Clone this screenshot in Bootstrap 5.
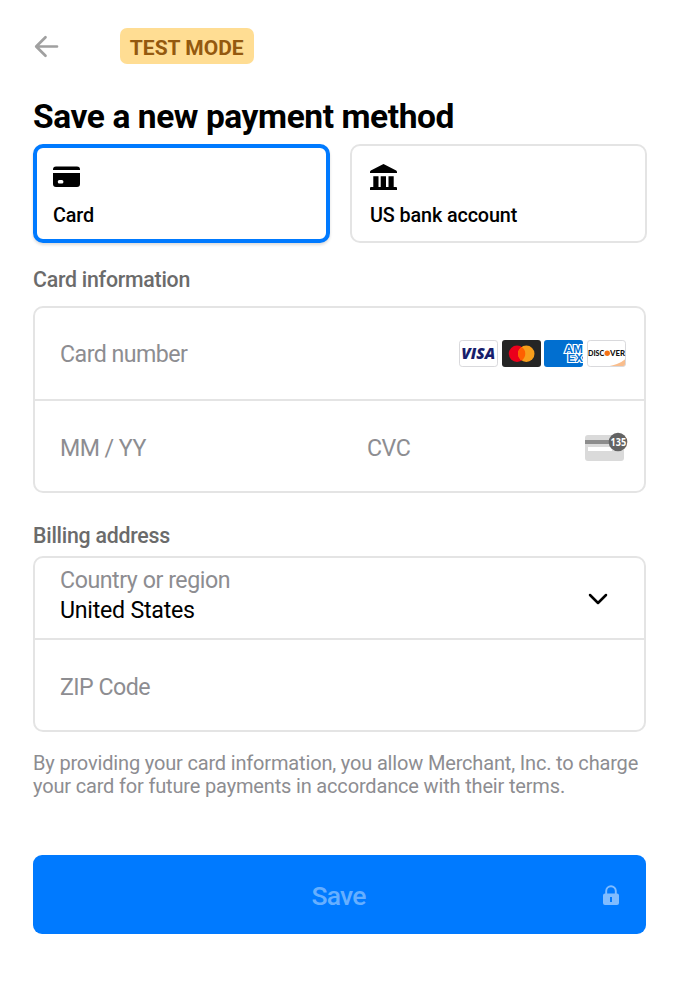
<!DOCTYPE html>
<html lang="en">
<head>
<meta charset="utf-8">
<meta name="viewport" content="width=device-width, initial-scale=1">
<title>Save a new payment method</title>
<link rel="stylesheet" href="https://cdn.jsdelivr.net/npm/bootstrap@5.3.0/dist/css/bootstrap.min.css">
<style>
body{font-family:Roboto,"Liberation Sans",sans-serif;color:#000;background:#fff}
.sheet{width:679px;height:1000px;padding:28px 32px 0 33px}
.topbar{height:36px}
.test-pill{margin-left:60.500px;width:134.500px;height:36px;border-radius:7px;background:#ffdd93;color:#94590f;font-weight:700;font-size:21px;letter-spacing:0;padding-top:5px}
.title{font-size:33.5px;line-height:40px;font-weight:700;margin:33px 0 7px;letter-spacing:-.42px}
.tabs{display:grid;grid-template-columns:297px 297px;column-gap:20px;width:614px}
.method{height:99px;border:2px solid #e4e4e4;border-radius:10px;background:#fff;padding:17px 18px 0;text-align:left;font-size:19.8px;line-height:24px;letter-spacing:-.12px;font-weight:500;color:#000}
.method svg{margin-bottom:13px}
.method.selected{border:4px solid #007aff;padding:15px 16px 0;box-shadow:0 2px 3px rgba(0,0,0,.14)}
.section-label{font-size:21.3px;line-height:26px;font-weight:500;letter-spacing:-.24px;color:#6b6b6b;margin:0}
.fieldset-box{border:2px solid #e4e4e4;border-radius:10px;width:613px;font-size:23.2px;letter-spacing:-.54px;color:#8d8d91}
.fieldset-box .line{padding:0 18px 0 25px}
.fieldset-box svg{letter-spacing:0}
.region-label{letter-spacing:-.45px}
.chosen{letter-spacing:-.25px}
.rule{border-bottom:2px solid #e4e4e4}
.terms{font-size:20px;line-height:23px;letter-spacing:-.165px;color:#8d8d91;margin:20px 0 0}
.save{width:613px;height:79px;border:0;border-radius:9px;background:#007aff;color:#66afff;font-size:26.5px;letter-spacing:-.8px;font-weight:500;margin-top:57px;padding:2px 2px 0 0}
.save svg{right:27px;top:29.500px}
</style>
</head>
<body>
<main class="sheet">
  <header class="topbar d-flex align-items-center">
    <svg width="26" height="24" viewBox="0 0 26 24" fill="none" stroke="#a0a0a0" stroke-width="2.700" stroke-linecap="round" stroke-linejoin="round"><path d="M24 12.500H4M12.500 3.200 3.200 12.500l9.300 9.300"/></svg>
    <span class="test-pill d-flex align-items-center justify-content-center">TEST MODE</span>
  </header>
  <h1 class="title text-nowrap">Save a new payment method</h1>
  <div class="tabs">
    <button type="button" class="method selected d-flex flex-column align-items-start">
      <svg width="27" height="28" viewBox="0 0 27 28"><path d="M0 7V6.500A3 3 0 0 1 3 3.500h21a3 3 0 0 1 3 3V7z"/><path fill-rule="evenodd" d="M0 10h27v11a3 3 0 0 1-3 3H3a3 3 0 0 1-3-3zM6.300 17a1.500 1.500 0 0 0-1.500 1.500v.5a1.500 1.500 0 0 0 1.500 1.500h2.600a1.500 1.500 0 0 0 1.500-1.500v-.5A1.500 1.500 0 0 0 8.900 17z"/></svg>
      Card
    </button>
    <button type="button" class="method d-flex flex-column align-items-start">
      <svg width="27" height="28" viewBox="0 0 27 28"><path d="M13.500 1 26.200 7.500Q27 8 27 9v1H0V9q0-1 .8-1.500zM3.300 13.300h5.200v10.700h2.200V13.300H16v10.700h2.500V13.300h5.200v10.700H26q1 0 1 1v2H0v-2Q0 24 1 24h2.300z"/></svg>
      US bank account
    </button>
  </div>
  <h2 class="section-label" style="margin:24px 0 13px">Card information</h2>
  <section class="fieldset-box">
    <div class="line rule d-flex align-items-center justify-content-between" style="height:93px">
      <span style="padding-top:2px">Card number</span>
      <div class="d-flex" style="gap:3.600px;margin-right:.2px">
        <svg width="39" height="27" viewBox="0 0 39 27"><rect x=".5" y=".5" width="38" height="26" rx="2.700" fill="#fff" stroke="#d9d9dc"/><text x="2.300" y="19.200" font-family="Open Sans" font-weight="800" font-style="italic" font-size="15" textLength="34" lengthAdjust="spacingAndGlyphs" fill="#171e6c">VISA</text></svg>
        <svg width="39" height="27" viewBox="0 0 39 27"><rect width="39" height="27" rx="3" fill="#252525"/><circle cx="15" cy="13.700" r="8.200" fill="#eb001b"/><circle cx="24.300" cy="13.700" r="8.200" fill="#f79e1b"/><path d="M19.650 6.900a8.200 8.200 0 0 1 0 13.600 8.200 8.200 0 0 1 0-13.600" fill="#ff5f00"/></svg>
        <svg width="39" height="27" viewBox="0 0 39 27"><defs><clipPath id="amex"><rect width="39" height="27" rx="3"/></clipPath></defs><g clip-path="url(#amex)"><rect width="39" height="27" fill="#016fd0"/><text font-family="Liberation Sans" font-weight="700" font-size="10" fill="#016fd0" stroke="#fff" stroke-width="2.200" paint-order="stroke"><tspan x="20.500" y="12.700" textLength="18.500" lengthAdjust="spacingAndGlyphs">AM</tspan><tspan x="23.500" y="22" textLength="15.500" lengthAdjust="spacingAndGlyphs">EX</tspan></text></g></svg>
        <svg width="39" height="27" viewBox="0 0 39 27"><path d="M38.500 19v5q0 2.500-2.500 2.500H20.500Q32 24.500 38.500 19" fill="#f9bd8c"/><rect x=".5" y=".5" width="38" height="26" rx="2.700" fill="none" stroke="#d9d9dc"/><g font-family="Lato" font-weight="900" font-size="7.800" fill="#111"><text x="1" y="16.300" textLength="16.300" lengthAdjust="spacingAndGlyphs">DISC</text><text x="23" y="16.300" textLength="15" lengthAdjust="spacingAndGlyphs">VER</text></g><circle cx="20.200" cy="13.300" r="2.700" fill="#f47216"/></svg>
      </div>
    </div>
    <div class="line d-flex align-items-center" style="height:90px">
      <span style="width:307px;padding-top:5px">MM / YY</span><span class="flex-grow-1" style="padding-top:5px">CVC</span>
      <svg width="44" height="30" viewBox="0 0 44 30" style="margin:2px -2px 0 0"><rect x="1" y="3" width="39" height="26" rx="3" fill="#dadada"/><path d="M1 8h39v4H1z" fill="#8d8d8d"/><rect x="4" y="15" width="24" height="4" fill="#fff"/><circle cx="34" cy="10" r="9.300" fill="#636363"/><text x="26.600" y="14" textLength="15.500" lengthAdjust="spacingAndGlyphs" font-family="Open Sans" font-weight="700" font-size="10.800" fill="#fff">135</text></svg>
    </div>
  </section>
  <h2 class="section-label" style="margin:30px 0 7px">Billing address</h2>
  <section class="fieldset-box">
    <div class="line rule d-flex align-items-center justify-content-between" style="height:82px">
      <div style="line-height:30.500px;padding-bottom:6px"><div class="region-label">Country or region</div><div class="chosen text-black">United States</div></div>
      <svg width="20" height="12" viewBox="0 0 20 12" fill="none" stroke="#000" stroke-width="2.500" stroke-linecap="round" stroke-linejoin="round" style="margin:2px 18.500px 0 0"><path d="m2 2 8 8 8-8"/></svg>
    </div>
    <div class="line d-flex align-items-center" style="height:90px;padding-top:4px">ZIP Code</div>
  </section>
  <p class="terms text-nowrap">By providing your card information, you allow Merchant, Inc. to charge<br>your card for future payments in accordance with their terms.</p>
  <button type="button" class="save position-relative">Save
    <svg class="position-absolute" width="16" height="21" viewBox="0 0 16 21"><path d="M3.200 9V6a4.800 4.800 0 0 1 9.600 0v3" fill="none" stroke="#80bcff" stroke-width="1.900"/><path fill-rule="evenodd" fill="#80bcff" d="M2 8.500h12a2 2 0 0 1 2 2v7.500a2 2 0 0 1-2 2H2a2 2 0 0 1-2-2v-7.500a2 2 0 0 1 2-2m5 3.500v5h2v-5z"/></svg>
  </button>
</main>
<script src="https://cdn.jsdelivr.net/npm/bootstrap@5.3.0/dist/js/bootstrap.bundle.min.js"></script>
</body>
</html>
